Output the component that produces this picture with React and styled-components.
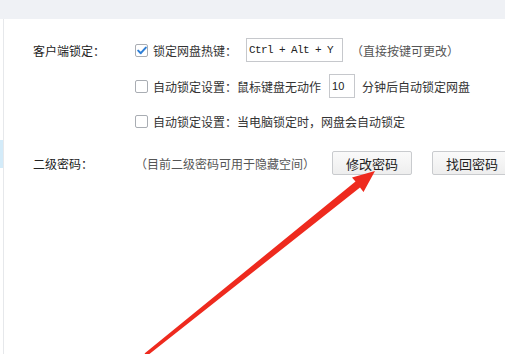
import React from "react";
import styled, { createGlobalStyle } from "styled-components";

const Global = createGlobalStyle`
  html, body {
    margin: 0;
    padding: 0;
    background: #ffffff;
  }
  body {
    font-family: "Noto Sans CJK SC", "Noto Sans", sans-serif;
    font-size: 12px;
    color: #333;
  }
`;

/* ===== FRAME ===== */
const Page = styled.div`
  position: relative;
  width: 505px;
  height: 354px;
  overflow: hidden;
  display: flex;
  flex-direction: column;
`;

const TopBand = styled.div`
  height: 19px;
  flex: none;
  background: #eff1f5;
`;

const Body = styled.div`
  flex: 1;
  display: flex;
`;

const Rail = styled.div`
  width: 3px;
  flex: none;
  padding-top: 121px;
`;

const RailMark = styled.div`
  height: 28px;
  background: #d3ebf9;
`;

const Content = styled.div`
  flex: 1;
  border-left: 1px solid #e6e8eb;
  padding: 19px 0 0 29px;
  display: flex;
  flex-direction: column;
`;

/* ===== ROWS ===== */
const Row = styled.div`
  display: flex;
  align-items: center;
  height: 24px;
  margin-top: ${(p) => p.$top || 0}px;
  white-space: nowrap;
`;

const Label = styled.div`
  width: 102px;
  flex: none;
  color: #222;
`;

const Indent = styled.div`
  width: 102px;
  flex: none;
`;

const Box = styled.span`
  width: 11px;
  height: 11px;
  flex: none;
  border: 1px solid #a9adb3;
  border-radius: 2px;
  background: #fff;
  margin-right: 5px;
  display: flex;
  align-items: center;
  justify-content: center;
`;

const Text = styled.span`
  color: ${(p) => (p.$muted ? "#555" : "#333")};
  margin-left: ${(p) => p.$gap || 0}px;
`;

const Field = styled.div`
  height: 22px;
  width: ${(p) => p.$w}px;
  flex: none;
  border: 1px solid #c6c8cc;
  margin-left: ${(p) => p.$gap || 0}px;
  display: flex;
  align-items: center;
  padding-left: 2px;
  box-sizing: content-box;
  font-family: ${(p) =>
    p.$mono ? '"Liberation Mono", monospace' : '"Liberation Sans", sans-serif'};
  font-size: 11px;
  letter-spacing: ${(p) => (p.$mono ? "-0.6px" : "0")};
  color: #222;
`;

const Button = styled.div`
  width: 78px;
  height: 22px;
  flex: none;
  border: 1px solid #c9cbce;
  border-radius: 2px;
  background: linear-gradient(#fafafa, #eeeeee);
  margin-left: ${(p) => p.$gap || 0}px;
  display: flex;
  align-items: center;
  justify-content: center;
  font-size: 13px;
  color: #222;
`;

const Arrow = styled.svg`
  position: absolute;
  left: 0;
  top: 0;
  pointer-events: none;
`;

const Check = ({ on }) => (
  <Box>
    {on && (
      <svg width="10" height="9" viewBox="0 0 10 9">
        <path
          d="M1.2 4.6 L3.8 7.2 L8.8 1.6"
          fill="none"
          stroke="#2f7fd6"
          strokeWidth="2"
          strokeLinecap="round"
          strokeLinejoin="round"
        />
      </svg>
    )}
  </Box>
);

export default function App() {
  return (
    <Page>
      <Global />
      <TopBand />
      <Body>
        <Rail>
          <RailMark />
        </Rail>
        <Content>
          <Row>
            <Label>客户端锁定：</Label>
            <Check on />
            <Text>锁定网盘热键：</Text>
            <Field $w={93} $gap={9} $mono>
              Ctrl + Alt + Y
            </Field>
            <Text $muted $gap={8}>（直接按键可更改）</Text>
          </Row>
          <Row $top={12}>
            <Indent />
            <Check />
            <Text>自动锁定设置：鼠标键盘无动作</Text>
            <Field $w={22} $gap={8}>10</Field>
            <Text $gap={7}>分钟后自动锁定网盘</Text>
          </Row>
          <Row $top={11}>
            <Indent />
            <Check />
            <Text>自动锁定设置：当电脑锁定时，网盘会自动锁定</Text>
          </Row>
          <Row $top={18}>
            <Label>二级密码：</Label>
            <Text $muted>（目前二级密码可用于隐藏空间）</Text>
            <Button $gap={17}>修改密码</Button>
            <Button $gap={20}>找回密码</Button>
          </Row>
        </Content>
      </Body>
      <Arrow width="505" height="354" viewBox="0 0 505 354">
        <polygon
          points="375,171 352,177.5 355.5,181.5 144.5,353.5 147.5,355.5 360,187.5 363.5,192"
          fill="#ee2a1e"
        />
      </Arrow>
    </Page>
  );
}
